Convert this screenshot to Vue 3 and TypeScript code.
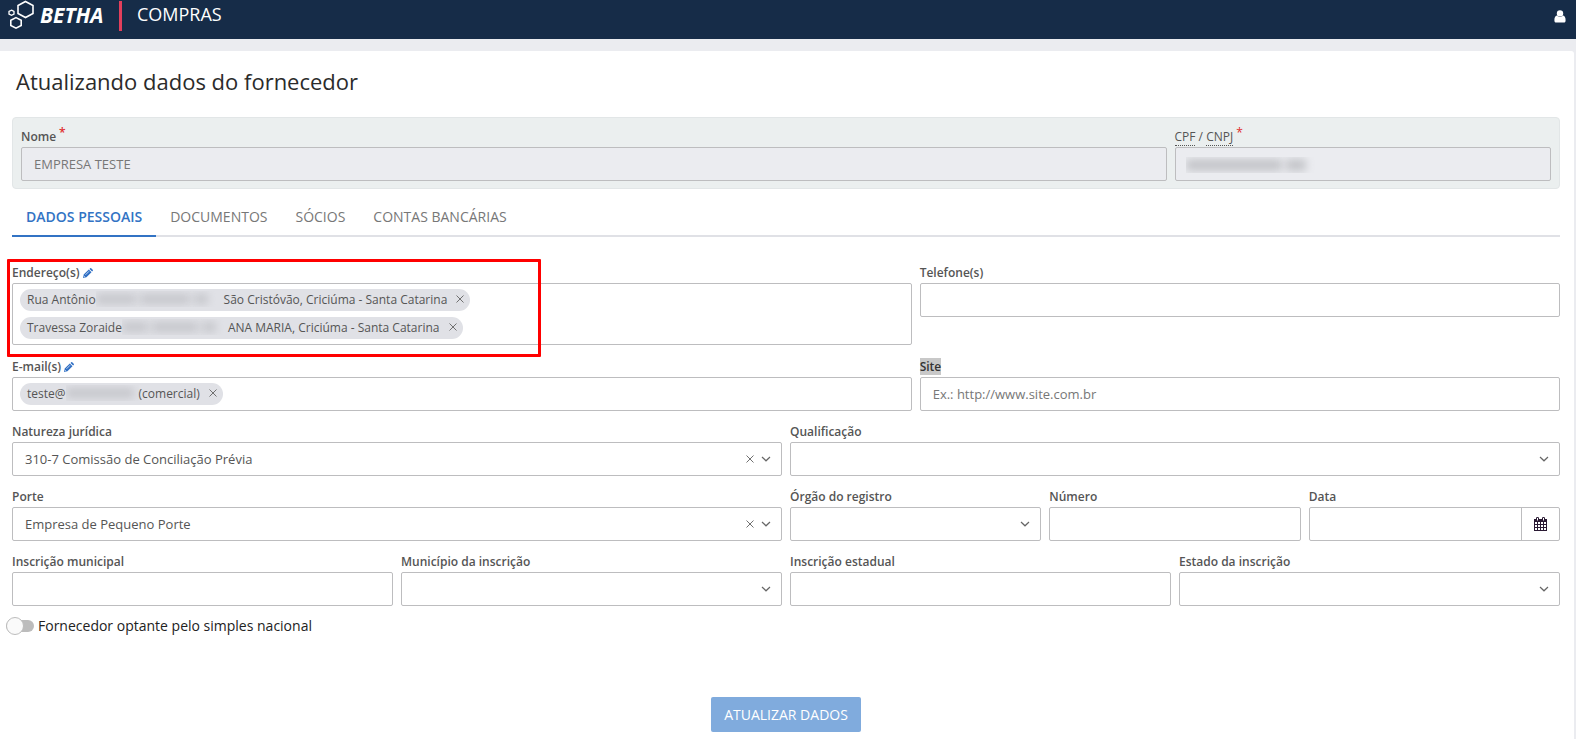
<script setup lang="ts">
import { ref } from 'vue'

interface Tag {
  before: string
  hidden: number[]
  width: number
  after: string
}

const tabs = ['Dados pessoais', 'Documentos', 'Sócios', 'Contas bancárias']
const active = ref(0)

const addresses = ref<Tag[]>([
  { before: 'Rua Antônio', hidden: [40, 50, 14], width: 128, after: 'São Cristóvão, Criciúma - Santa Catarina' },
  { before: 'Travessa Zoraide', hidden: [26, 46, 14], width: 106, after: 'ANA MARIA, Criciúma - Santa Catarina' },
])
const emails = ref<Tag[]>([
  { before: 'teste@', hidden: [68], width: 73, after: '(comercial)' },
])

const nature = ref('310-7 Comissão de Conciliação Prévia')
const size = ref('Empresa de Pequeno Porte')
const simples = ref(false)
</script>

<template>
  <div class="page">
    <header class="topbar">
      <a class="brand" href="#" aria-label="Betha">
        <svg class="hexes" viewBox="0 0 28 30" fill="none" stroke="#fff" stroke-width="1.6">
          <path d="M17.5 1.500 L25 5.500 V13.500 L17.5 17.500 L10 13.500 V5.500 Z" />
          <path d="M8 17.600 L13.200 20.300 V25.500 L8 28.200 L2.800 25.500 V20.300 Z" />
          <path d="M3.5 10.200 L6 11.500 V14 L3.5 15.300 L1 14 V11.500 Z" stroke-width="1.3" />
        </svg>
        <span class="wordmark">BETHA</span>
      </a>
      <span class="divider"></span>
      <span class="product">COMPRAS</span>
      <button class="user" type="button" aria-label="Usuário">
        <svg viewBox="0 0 12 13" fill="#fff">
          <circle cx="6" cy="3.4" r="3.2" />
          <path d="M3 5.6 C1 6 .4 8 .4 10.4 C.4 12 1.200 12.600 2.400 12.600 H9.600 C10.800 12.600 11.600 12 11.600 10.400 C11.600 8 11 6 9 5.600 C8 7.300 4 7.300 3 5.600 Z" />
        </svg>
      </button>
    </header>

    <main class="panel">
      <h1>Atualizando dados do fornecedor</h1>

      <section class="identity grid">
        <div class="field c9">
          <label for="nome">Nome <sup>*</sup></label>
          <input id="nome" class="box" value="EMPRESA TESTE" disabled />
        </div>
        <div class="field c3">
          <label for="doc"><span><abbr>CPF</abbr> / <abbr>CNPJ</abbr></span> <sup>*</sup></label>
          <div class="masked">
            <input id="doc" class="box" disabled />
            <span class="smudge doc-smudge" aria-hidden="true"><i></i><i></i></span>
          </div>
        </div>
      </section>

      <nav class="tabs" role="tablist">
        <button
          v-for="(tab, i) in tabs"
          :key="tab"
          type="button"
          role="tab"
          :aria-selected="active === i"
          :class="{ active: active === i }"
          @click="active = i"
        >{{ tab }}</button>
      </nav>

      <form class="grid form" @submit.prevent>
        <div class="field c7">
          <div class="marker" aria-hidden="true"></div>
          <label for="addr">Endereço(s)
            <svg class="pencil" viewBox="0 0 10 10"><path d="M0 10 L.7 6.600 L5.800 1.500 L8.500 4.200 L3.400 9.300 Z M6.500 .9 L7.200 .2 Q7.700 -.2 8.200 .3 L9.700 1.800 Q10.200 2.300 9.800 2.800 L9.100 3.500 Z" /><path class="glint" d="M2.500 6.800 L6 3.300 M.8 8 L2 9.200" /></svg>
          </label>
          <div class="box tags tall">
            <span v-for="(tag, i) in addresses" :key="tag.before" class="tag">
              <span>{{ tag.before }}</span>
              <span class="smudge" :style="{ width: tag.width + 'px' }" aria-hidden="true">
                <i v-for="(w, j) in tag.hidden" :key="j" :style="{ width: w + 'px' }"></i>
              </span>
              <span>{{ tag.after }}</span>
              <button type="button" aria-label="Remover" @click="addresses.splice(i, 1)">
                <svg viewBox="0 0 8 8"><path d="M.5 .5 L7.500 7.500 M7.500 .5 L.5 7.500" /></svg>
              </button>
            </span>
            <input id="addr" class="bare" />
          </div>
        </div>
        <div class="field c5">
          <label for="tel">Telefone(s)</label>
          <input id="tel" class="box" />
        </div>

        <div class="field c7">
          <label for="mail">E-mail(s)
            <svg class="pencil" viewBox="0 0 10 10"><path d="M0 10 L.7 6.600 L5.800 1.500 L8.500 4.200 L3.400 9.300 Z M6.500 .9 L7.200 .2 Q7.700 -.2 8.200 .3 L9.700 1.800 Q10.200 2.300 9.800 2.800 L9.100 3.500 Z" /><path class="glint" d="M2.500 6.800 L6 3.300 M.8 8 L2 9.200" /></svg>
          </label>
          <div class="box tags">
            <span v-for="(tag, i) in emails" :key="tag.before" class="tag">
              <span>{{ tag.before }}</span>
              <span class="smudge" :style="{ width: tag.width + 'px' }" aria-hidden="true">
                <i v-for="(w, j) in tag.hidden" :key="j" :style="{ width: w + 'px' }"></i>
              </span>
              <span>{{ tag.after }}</span>
              <button type="button" aria-label="Remover" @click="emails.splice(i, 1)">
                <svg viewBox="0 0 8 8"><path d="M.5 .5 L7.500 7.500 M7.500 .5 L.5 7.500" /></svg>
              </button>
            </span>
            <input id="mail" class="bare" />
          </div>
        </div>
        <div class="field c5">
          <label for="site"><mark>Site</mark></label>
          <input id="site" class="box" placeholder="Ex.: http://www.site.com.br" />
        </div>

        <div class="field c6">
          <label for="nat">Natureza jurídica</label>
          <div class="pick">
            <select id="nat" v-model="nature" class="box">
              <option value=""></option>
              <option>310-7 Comissão de Conciliação Prévia</option>
            </select>
            <button v-if="nature" type="button" aria-label="Limpar" @click="nature = ''">
              <svg class="clear" viewBox="0 0 8 8"><path d="M.5 .5 L7.500 7.500 M7.500 .5 L.5 7.500" /></svg>
            </button>
            <svg class="chevron" viewBox="0 0 10 6"><path d="M1 1 L5 4.800 L9 1" /></svg>
          </div>
        </div>
        <div class="field c6">
          <label for="qual">Qualificação</label>
          <div class="pick">
            <select id="qual" class="box"><option></option></select>
            <svg class="chevron" viewBox="0 0 10 6"><path d="M1 1 L5 4.800 L9 1" /></svg>
          </div>
        </div>

        <div class="field c6">
          <label for="porte">Porte</label>
          <div class="pick">
            <select id="porte" v-model="size" class="box">
              <option value=""></option>
              <option>Empresa de Pequeno Porte</option>
            </select>
            <button v-if="size" type="button" aria-label="Limpar" @click="size = ''">
              <svg class="clear" viewBox="0 0 8 8"><path d="M.5 .5 L7.500 7.500 M7.500 .5 L.5 7.500" /></svg>
            </button>
            <svg class="chevron" viewBox="0 0 10 6"><path d="M1 1 L5 4.800 L9 1" /></svg>
          </div>
        </div>
        <div class="field c2">
          <label for="orgao">Órgão do registro</label>
          <div class="pick">
            <select id="orgao" class="box"><option></option></select>
            <svg class="chevron" viewBox="0 0 10 6"><path d="M1 1 L5 4.800 L9 1" /></svg>
          </div>
        </div>
        <div class="field c2">
          <label for="num">Número</label>
          <input id="num" class="box" />
        </div>
        <div class="field c2">
          <label for="data">Data</label>
          <div class="date box">
            <input id="data" class="bare" />
            <button type="button" aria-label="Abrir calendário">
              <svg viewBox="0 0 13 14">
                <path fill="#2a1a33" fill-rule="evenodd" d="M0 2 H2 V1 Q2 0 3.500 0 Q5 0 5 1 V2 H8 V1 Q8 0 9.500 0 Q11 0 11 1 V2 H13 V14 H0 Z M3 1 V3.500 H4 V1 Z M9 1 V3.500 H10 V1 Z M1 5 V7 H3 V5 Z M4 5 V7 H6 V5 Z M7 5 V7 H9 V5 Z M10 5 V7 H12 V5 Z M1 8 V10 H3 V8 Z M4 8 V10 H6 V8 Z M7 8 V10 H9 V8 Z M10 8 V10 H12 V8 Z M1 11 V13 H3 V11 Z M4 11 V13 H6 V11 Z M7 11 V13 H9 V11 Z M10 11 V13 H12 V11 Z" />
              </svg>
            </button>
          </div>
        </div>

        <div class="field c3">
          <label for="im">Inscrição municipal</label>
          <input id="im" class="box" />
        </div>
        <div class="field c3">
          <label for="mi">Município da inscrição</label>
          <div class="pick">
            <select id="mi" class="box"><option></option></select>
            <svg class="chevron" viewBox="0 0 10 6"><path d="M1 1 L5 4.800 L9 1" /></svg>
          </div>
        </div>
        <div class="field c3">
          <label for="ie">Inscrição estadual</label>
          <input id="ie" class="box" />
        </div>
        <div class="field c3">
          <label for="ei">Estado da inscrição</label>
          <div class="pick">
            <select id="ei" class="box"><option></option></select>
            <svg class="chevron" viewBox="0 0 10 6"><path d="M1 1 L5 4.800 L9 1" /></svg>
          </div>
        </div>
      </form>

      <label class="toggle">
        <input v-model="simples" type="checkbox" role="switch" />
        <span>Fornecedor optante pelo simples nacional</span>
      </label>

      <div class="actions">
        <button type="button">ATUALIZAR DADOS</button>
      </div>
    </main>
  </div>
</template>

<style>
body {
  background: #ebecf0;
}
</style>

<style scoped>
.page,
.page * {
  box-sizing: border-box;
}
.page {
  min-height: 100vh;
  display: flex;
  flex-direction: column;
  font-family: 'Open Sans', 'Noto Sans', sans-serif;
  font-size: 13px;
  color: #555;
}
button,
input,
select {
  font: inherit;
  color: inherit;
  margin: 0;
}
button {
  border: 0;
  background: none;
  padding: 0;
  cursor: pointer;
}
svg {
  display: block;
}

.topbar {
  height: 39px;
  flex: none;
  display: flex;
  align-items: flex-start;
  padding: 0 10px 0 8px;
  background: #162c48;
  color: #fff;
}
.brand {
  display: flex;
  color: #fff;
  text-decoration: none;
}
.hexes {
  width: 28px;
  height: 30px;
}
.wordmark {
  margin-left: 4px;
  width: 67px;
  font-size: 21px;
  line-height: 30px;
  font-weight: 700;
  font-style: italic;
}
.divider {
  width: 3px;
  height: 30px;
  margin: 1px 15px 0 12px;
  background: #e23f5c;
}
.product {
  font-size: 18px;
  line-height: 29px;
}
.user {
  margin: 10px 0 0 auto;
}
.user svg {
  width: 12px;
  height: 13px;
}

.panel {
  flex: 1;
  margin: 12px 2px 0 0;
  padding: 0 14px 7px 12px;
  background: #fff;
  border-top-right-radius: 3px;
}
h1 {
  margin: 0;
  padding: 15px 4px 21px;
  font-size: 22px;
  line-height: 30px;
  font-weight: 400;
  color: #2b2b2b;
}

.grid {
  display: grid;
  grid-template-columns: repeat(12, minmax(0, 1fr));
  column-gap: 8px;
}
.c2 { grid-column: span 2; }
.c3 { grid-column: span 3; }
.c5 { grid-column: span 5; }
.c6 { grid-column: span 6; }
.c7 { grid-column: span 7; }
.c9 { grid-column: span 9; }

.field {
  position: relative;
}
.field > label {
  display: flex;
  align-items: center;
  gap: 3px;
  height: 20px;
  padding-bottom: 1px;
  font-size: 12px;
  line-height: 17px;
  font-weight: 600;
}
.box {
  display: block;
  width: 100%;
  height: 34px;
  padding: 0 12px;
  border: 1px solid #bdbdbf;
  border-radius: 2px;
  background: #fff;
  outline: 0;
}
.bare {
  flex: 1;
  min-width: 0;
  width: 0;
  border: 0;
  padding: 0;
  background: none;
  outline: 0;
}

.identity {
  padding: 9px 8px 7px;
  border: 1px solid #e2e6e7;
  border-radius: 4px;
  background: #ebefef;
}
.identity .box {
  background: #ebecf0;
  color: #777;
}
sup {
  align-self: flex-start;
  font-size: 12px;
  line-height: 12px;
  color: #e02c2c;
}
abbr {
  border-bottom: 1px dotted #555;
}
#doc {
  min-width: 0;
}
.identity .c3 > label {
  font-weight: 500;
}
.masked {
  position: relative;
}
.doc-smudge {
  position: absolute;
  left: 11px;
  top: 10px;
  width: 130px;
}

.tabs {
  display: flex;
  margin-top: 8px;
  border-bottom: 2px solid #e0e1e6;
}
.tabs button {
  height: 40px;
  margin-bottom: -2px;
  padding: 0 14px;
  font-size: 14px;
  text-transform: uppercase;
  color: #777;
  border-bottom: 2px solid transparent;
}
.tabs .active {
  font-weight: 600;
  color: #3273c4;
  border-bottom-color: #3273c4;
}

.form {
  margin-top: 26px;
  row-gap: 11px;
}
.marker {
  position: absolute;
  left: -5px;
  top: -4px;
  width: 534px;
  height: 98px;
  border: 3px solid #f00;
  border-radius: 1px;
  pointer-events: none;
}
.pencil {
  width: 10px;
  height: 10px;
  fill: #2f6fc4;
}
.glint {
  fill: none;
  stroke: #fff;
  stroke-width: 0.7;
}
.tags {
  display: flex;
  flex-wrap: wrap;
  gap: 6px 0;
  padding: 5px 7px;
}
.tags.tall {
  height: auto;
  margin-bottom: 1px;
}
.tall .tag {
  margin-right: 40%;
}
.tag {
  display: inline-flex;
  align-items: center;
  height: 22px;
  padding: 0 6px 2px 7px;
  border-radius: 11px;
  background: #e0e1e6;
  font-size: 12px;
  white-space: nowrap;
}
.tag svg,
.clear {
  width: 8px;
  height: 8px;
  stroke: #707070;
  stroke-width: 1;
  fill: none;
}
.tag button {
  margin-left: 9px;
}
.smudge {
  display: inline-flex;
  align-items: center;
  gap: 4px;
  height: 16px;
  overflow: hidden;
}
.smudge i {
  height: 10px;
  background: #8a8b90;
  opacity: 0.3;
  filter: blur(4px);
}
.doc-smudge i {
  width: 96px;
  height: 12px;
  opacity: 0.4;
}
.doc-smudge i + i {
  width: 20px;
}
mark {
  background: #c8c8c8;
  color: #333;
}
#site::placeholder {
  color: #777;
  opacity: 1;
}

.pick {
  display: grid;
  grid-template-columns: 1fr auto auto;
  align-items: center;
}
.pick select {
  grid-area: 1 / 1 / 2 / 4;
  appearance: none;
}
.pick button {
  grid-area: 1 / 2;
  margin-right: 7px;
}
.chevron {
  grid-area: 1 / 3;
  width: 10px;
  height: 6px;
  margin-right: 11px;
  fill: none;
  stroke: #666;
  stroke-width: 1.2;
  pointer-events: none;
}
.date {
  display: flex;
  padding: 0;
}
.date button {
  width: 38px;
  display: grid;
  place-items: center;
  border-left: 1px solid #bdbdbf;
}
.date svg {
  width: 13px;
  height: 14px;
}

.toggle {
  display: flex;
  align-items: center;
  gap: 4px;
  margin: 10px 0 0 -6px;
  font-size: 14px;
  line-height: 20px;
  color: #222;
}
.toggle input {
  appearance: none;
  width: 28px;
  height: 12px;
  display: flex;
  align-items: center;
  background: #bcbcbc;
  border-radius: 6px;
}
.toggle input::before {
  content: '';
  width: 16px;
  height: 16px;
  border: 1px solid #bcbcbc;
  border-radius: 50%;
  background: #fafafa;
}
.toggle input:checked::before {
  margin-left: auto;
}
.actions {
  display: flex;
  justify-content: center;
  margin-top: 61px;
}
.actions button {
  height: 35px;
  padding: 0 13px;
  border-radius: 2px;
  background: #80abdd;
  color: #fff;
  font-size: 14px;
}
</style>
